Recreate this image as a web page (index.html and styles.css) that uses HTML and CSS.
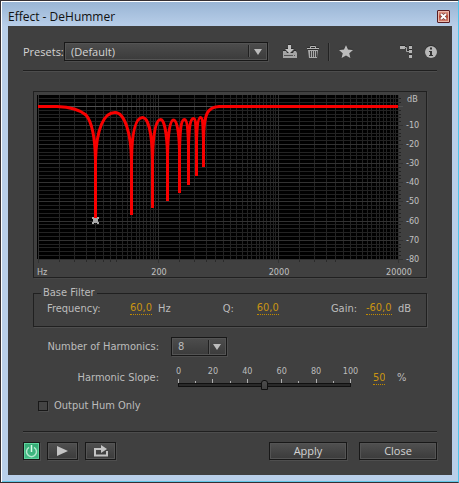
FILE: index.html
```html
<!DOCTYPE html>
<html lang="en">
<head>
<meta charset="utf-8">
<title>Effect - DeHummer</title>
<link rel="stylesheet" href="styles.css">
</head>
<body>
<div class="window">
  <header class="titlebar">
    <h1 class="title">Effect - DeHummer</h1>
    <button class="close" type="button" aria-label="Close window">
      <svg width="7" height="7" viewBox="0 0 7 7"><path d="M1 1l5 5M6 1l-5 5" stroke="#5d3534" stroke-width="3"/><path d="M1 1l5 5M6 1l-5 5" stroke="#fff" stroke-width="2"/></svg>
    </button>
  </header>
  <main class="panel">
    <div class="toolbar">
      <label class="ui" for="preset">Presets:</label>
      <div class="combo combo-preset">
        <select id="preset" class="ui"><option>(Default)</option></select>
        <svg class="arrow" width="12" height="12" viewBox="0 0 12 12"><path d="M.5 0v12" stroke="#202020"/><path d="M1.500 0v12" stroke="#5a5a5a"/></svg>
        <svg class="tip" width="8" height="6" viewBox="0 0 8 6"><path d="M0 0h8L4 6z" fill="#bcbcbc"/></svg>
      </div>
      <button class="tool tool-save" type="button" aria-label="Save preset">
        <svg width="16" height="14" viewBox="0 0 16 14"><path d="M1 6h3l1 2h6l1-2h2l1 2v5H1z" fill="#a5a5a5"/><path d="M6 0h3v4h3L7.500 8.500 3 4h3z" fill="#c0c0c0"/><path d="M2 10.500h9M12 10.500h1" stroke="#555"/></svg>
      </button>
      <button class="tool tool-trash" type="button" aria-label="Delete preset">
        <svg width="12" height="14" viewBox="0 0 12 14"><path d="M3.500 3V1.500h5V3M0 3.500h12" fill="none" stroke="#b4b4b4"/><path d="M1 5h10l-1 8H2z" fill="#aaa"/><path d="M3.500 6v6M5.500 6v6M7.500 6v6M9.500 6v6" stroke="#444"/></svg>
      </button>
      <span class="divider"></span>
      <button class="tool tool-star" type="button" aria-label="Favorite">
        <svg width="14" height="13" viewBox="0 0 14 13"><path d="M7 0l2 4.500 5 .500-3.700 3.200L11.400 13 7 10.500 2.600 13l1.100-4.800L0 5l5-.500z" fill="#bcbcbc"/></svg>
      </button>
      <button class="tool tool-route" type="button" aria-label="Channel map">
        <svg width="13" height="13" viewBox="0 0 13 13"><path d="M0 1h5v3H0zM9 1h3v3H9zM9 5h3v3H9zM9 10h3v3H9z" fill="#b4b4b4"/><path d="M4 2.500h2.500v4H9" fill="none" stroke="#a5a5a5"/></svg>
      </button>
      <button class="tool" type="button" aria-label="Info">
        <svg width="12" height="12" viewBox="0 0 12 12"><circle cx="6" cy="6" r="6" fill="#b8b8b8"/><path d="M5 1.500h2v2H5zM4 5h3v4h1v1H4V9h1V6H4z" fill="#333"/></svg>
      </button>
    </div>

    <section class="body">
      <figure class="chart">
        <svg viewBox="34 92 392 185" role="img" aria-label="Frequency response">
          <defs>
            <path id="decade" d="M59.500 0v164M74.500 0v164M86.500 0v164M95.500 0v164M103.500 0v164M110.500 0v164M116.500 0v164M122.500 0v164M127.500 0v164M131.500 0v164M136.500 0v164M139.500 0v164M143.500 0v164M146.500 0v164M150.500 0v164M153.500 0v164M155.500 0v164"/>
          </defs>
          <rect x="37" y="95" width="362" height="164" fill="#000"/>
          <g class="minor">
            <g transform="translate(0 95)"><use href="#decade"/><use href="#decade" x="120"/><use href="#decade" x="240"/></g>
            <path d="M38 98.500h363M38 102.500h363M38 110.500h363M38 114.500h363M38 117.500h363M38 121.500h363M38 129.500h363M38 133.500h363M38 136.500h363M38 140.500h363M38 148.500h363M38 152.500h363M38 155.500h363M38 159.500h363M38 167.500h363M38 171.500h363M38 175.500h363M38 178.500h363M38 186.500h363M38 190.500h363M38 194.500h363M38 198.500h363M38 205.500h363M38 209.500h363M38 213.500h363M38 217.500h363M38 224.500h363M38 228.500h363M38 232.500h363M38 236.500h363M38 244.500h363M38 247.500h363M38 251.500h363M38 255.500h363"/>
            <g class="ticks" transform="translate(0 -2)"><path d="M59.500 262v2M74.500 262v2M86.500 262v2M95.500 262v2M103.500 262v2M110.500 262v2M116.500 262v2M179.500 262v2M194.500 262v2M206.500 262v2M215.500 262v2M223.500 262v2M299.500 262v2M314.500 262v2M326.500 262v2M335.500 262v2"/></g>
          </g>
          <path class="major" d="M38.500 95v168M158.500 95v168M278.500 95v168M398.500 95v168M38 125.500h365M38 144.500h365M38 163.500h365M38 182.500h365M38 201.500h365M38 221.500h365M38 240.500h365M38 259.500h365"/>
          <path class="zero" d="M38 106.500h365"/>
          <path class="curve" d="M38 106.500H57C70 107 79 109 86 115C92 122 95 138 95.500 160V219V160C96.500 128 104 112.500 115 112.500C125 112.500 131 134 131.500 160V215V160C132 130 136 117.500 142.500 117.500C148 117.500 152 132 152.500 160V208V160C153 132 156 119.500 160.500 119.500C164 119.500 167 132 167.500 155V201V155C168 132 170 120 173.500 120C177 120 179 132 179.500 150V193V150C180 130 181 119.500 184.500 119.500C187 119.500 188 130 188.500 145V185V145C189 130 190 118.500 193.500 118.500C196 118.500 196 128 196.500 140V176V140C197 128 198 117.500 200.500 117.500C203 117.500 203 128 203.500 140V167V140C204 114 207 107 219 106.500H398"/>
          <path class="handle" d="M92 217h2v1h3v-1h2v2h-1v3h1v2h-2v-1h-3v1h-2v-2h1v-3h-1z"/>
          <g class="axis">
            <text x="37" y="275">Hz</text>
            <text x="159" y="275" text-anchor="middle">200</text>
            <text x="279" y="275" text-anchor="middle">2000</text>
            <text x="399" y="275" text-anchor="middle">20000</text>
            <text x="407" y="102">dB</text>
            <text x="406" y="128">-10</text>
            <text x="406" y="147">-20</text>
            <text x="406" y="166">-30</text>
            <text x="406" y="185">-40</text>
            <text x="406" y="204">-50</text>
            <text x="406" y="224">-60</text>
            <text x="406" y="243">-70</text>
            <text x="406" y="262">-80</text>
          </g>
        </svg>
      </figure>

      <fieldset class="filter">
        <legend>Base Filter</legend>
        <div class="params">
          <div class="param"><label class="w-freq" for="freq">Frequency:</label><input id="freq" class="hot" value="60,0"><span>Hz</span></div>
          <div class="param"><label class="w-q" for="q">Q:</label><input id="q" class="hot" value="60,0"></div>
          <div class="param"><label class="w-gain" for="gain">Gain:</label><input id="gain" class="hot hot-gain" value="-60,0"><span>dB</span></div>
        </div>
      </fieldset>

      <div class="row row-count">
        <label class="name" for="count">Number of Harmonics:</label>
        <div class="combo combo-count">
          <select id="count"><option>8</option></select>
          <svg class="arrow" width="12" height="14" viewBox="0 0 12 14"><path d="M.5 0v14" stroke="#202020"/><path d="M1.500 0v14" stroke="#5a5a5a"/></svg>
          <svg class="tip" width="8" height="6" viewBox="0 0 8 6"><path d="M0 0h8L4 6z" fill="#bcbcbc"/></svg>
        </div>
      </div>

      <div class="row row-slope">
        <label class="name" for="slope">Harmonic Slope:</label>
        <div class="slider">
          <div class="scale"><span>0</span><span>20</span><span>40</span><span>60</span><span>80</span><span>100</span></div>
          <div class="marks"><i></i><i></i><i></i><i></i><i></i><i></i><i></i><i></i><i></i><i></i><i></i></div>
          <input id="slope" type="range" min="0" max="100" value="50">
        </div>
        <input class="hot hot-slope" aria-label="Harmonic slope value" value="50"><span class="unit">%</span>
      </div>

      <div class="check">
        <input id="hum" type="checkbox"><label for="hum">Output Hum Only</label>
      </div>
    </section>

    <footer class="footer">
      <button class="btn btn-power" type="button" aria-label="Power">
        <svg width="13" height="13" viewBox="0 0 13 13"><path d="M4 2.300a5 5 0 1 0 5 0" fill="none" stroke="#b4e8ce" stroke-width="1.500"/><path d="M6.500 0v7" stroke="#d9fae9" stroke-width="1.500"/></svg>
      </button>
      <button class="btn btn-icon" type="button" aria-label="Play">
        <svg width="11" height="10" viewBox="0 0 11 10"><path d="M0 0l11 5-11 5z" fill="#c4c4c4"/></svg>
      </button>
      <button class="btn btn-icon" type="button" aria-label="Loop">
        <svg width="14" height="12" viewBox="0 0 14 12"><path d="M4 4H1v6.500h12V6" fill="none" stroke="#c4c4c4" stroke-width="2"/><path d="M3 3h4V0l6 4-6 4V5H3z" fill="#c4c4c4"/></svg>
      </button>
      <button class="btn btn-text btn-apply ui" type="button">Apply</button>
      <button class="btn btn-text ui" type="button">Close</button>
    </footer>
  </main>
</div>
</body>
</html>
```
FILE: styles.css
```css
* { box-sizing: border-box; }

body {
  margin: 0;
  background: #352f33;
  color: #bcbcbc;
  font: 11px/14px "DejaVu Sans Condensed", "DejaVu Sans", sans-serif;
}

button, input, select {
  margin: 0;
  padding: 0;
  border: 0;
  background: none;
  color: inherit;
  font: inherit;
}

svg { display: block; }

.ui { font: 11px/16px "Open Sans", "Noto Sans", sans-serif; color: #d4d4d4; }

.window {
  display: flex;
  flex-direction: column;
  min-height: 100vh;
  padding: 0 6px 7px;
  border: 1px solid #352f33;
  border-right-color: #4fc4e8;
  background: linear-gradient(#98b4d4, #b9cfe9 26px);
  box-shadow: inset 1px 1px #fff, inset 0 -1px #62c8e8;
}

.titlebar {
  display: flex;
  justify-content: space-between;
  align-items: center;
  height: 25px;
  padding: 6px 2px 0 1px;
}

.title {
  margin: 0;
  color: #111;
  font: 12px/16px "Open Sans", "Noto Sans", sans-serif;
}

.close {
  display: grid;
  place-items: center;
  width: 13px;
  height: 13px;
  border: 1px solid #581c22;
  border-radius: 1px;
  background: linear-gradient(#e0a295, #bd4a34 50%, #d48676);
  box-shadow: inset 0 0 0 1px #e9b9ac;
}

.panel {
  flex: 1;
  margin-left: 1px;
  padding: 16px 15px 14px;
  background: #404040;
}

.toolbar {
  display: flex;
  align-items: center;
  height: 29px;
  padding-bottom: 9px;
  border-bottom: 1px solid #202020;
  box-shadow: 0 1px #4d4d4d;
}

.toolbar label { width: 41px; white-space: nowrap; }

.combo {
  position: relative;
  height: 19px;
  border: 1px solid #181818;
  background: linear-gradient(#4d4d4d, #3b3b3b);
  box-shadow: inset 0 0 0 1px #545454, 1px 1px #4e4e4e;
}

.combo select { display: block; width: 100%; height: 17px; padding-left: 6px; appearance: none; }
.combo .arrow { position: absolute; right: 6px; top: 2px; }
.combo .tip { position: absolute; right: 5px; top: 6px; }
.combo-preset { flex: 1; max-width: 204px; }
.combo-preset .arrow { right: 7px; }
.combo-count { width: 56px; margin-left: 12px; }

.tool { flex: none; filter: drop-shadow(0 -1px #2c2c2c); }
.tool-save { margin-left: 14px; }
.tool-trash { margin-left: 9px; }
.tool-star { margin-left: 10px; }
.tool-route { margin: 0 12px 0 auto; }

.divider { width: 1px; height: 18px; margin-left: 9px; background: #222; box-shadow: 1px 0 #4c4c4c; }

.body { padding: 20px 10px 0; }

.chart { margin: 0; border: 1px solid #202020; box-shadow: 1px 1px #474747; }
.chart svg { width: 100%; }
.minor, .major, .zero { fill: none; shape-rendering: crispEdges; }
.minor { stroke: #232323; }
.ticks { stroke: #2a2a2a; }
.major { stroke: #323232; }
.zero { stroke: #505050; }
.curve { fill: none; stroke: #f80000; stroke-width: 3; stroke-linejoin: bevel; }
.handle { fill: #a8a8a8; }
.axis { fill: #c0c0c0; font-size: 9px; }

.filter {
  min-width: 0;
  height: 41px;
  margin: 8px 0 0;
  padding: 0 15px 0 13px;
  border: 1px solid #202020;
  box-shadow: 1px 1px #4e4e4e;
}

.filter legend { margin-left: -6px; padding: 0 2px; }
.params { display: flex; justify-content: space-between; margin-top: 2px; }
.param { display: flex; }
.param span { margin-left: 6px; }
.w-freq { width: 83px; }
.w-q { width: 34px; }
.w-gain { width: 35px; }

.hot {
  width: 22px;
  height: 13px;
  border-bottom: 1px dotted #c08a00;
  color: #c99412;
}
.hot-gain { width: 26px; }
.hot-slope { width: 12px; margin-left: 22px; }

.row { display: flex; align-items: center; }
.name { width: 126px; text-align: right; white-space: nowrap; }
.row-count { margin-top: 10px; }
.row-slope { height: 26px; margin-top: 9px; }
.unit { margin-left: 12px; }

.slider { width: 173px; margin: 0 0 4px 19px; }
.scale, .marks { display: flex; justify-content: space-between; }
.scale { height: 13px; font-size: 9px; line-height: 12px; }
.scale span { display: flex; justify-content: center; width: 1px; }
.marks { height: 5px; align-items: flex-end; }
.marks i { width: 1px; height: 2px; background: #b0b0b0; }
.marks i:nth-child(odd) { height: 4px; }

.slider input {
  display: block;
  width: 100%;
  height: 4px;
  border: 1px solid #101010;
  background: #292929;
  appearance: none;
}

.slider input::-webkit-slider-thumb {
  appearance: none;
  width: 7px;
  height: 10px;
  background: linear-gradient(#4d4d4d, #404040);
  border: 1px solid #101010;
  border-radius: 3px 3px 0 0;
}

.check { display: flex; align-items: center; margin: 8px 0 0 5px; }
.check input {
  width: 10px;
  height: 10px;
  margin-right: 6px;
  border: 1px solid #181818;
  background: #444;
  box-shadow: 1px 1px #4d4d4d;
  appearance: none;
}

.footer {
  display: flex;
  gap: 7px;
  margin-top: 18px;
  padding-top: 10px;
  border-top: 1px solid #202020;
  box-shadow: inset 0 1px #4d4d4d;
}

.btn {
  display: grid;
  place-items: center;
  height: 18px;
  border: 1px solid #181818;
  background: linear-gradient(#505050, #3b3b3b);
  box-shadow: inset 0 0 0 1px #545454, 1px 1px #4e4e4e;
}
.btn-power {
  width: 17px;
  background: linear-gradient(#35a974, #42bd86);
  box-shadow: inset 0 0 0 1px #5fd39e, 1px 1px #4e4e4e;
}
.btn-icon { width: 31px; }
.btn-text { width: 78px; }
.btn-apply { margin: 0 5px 0 auto; }
```
